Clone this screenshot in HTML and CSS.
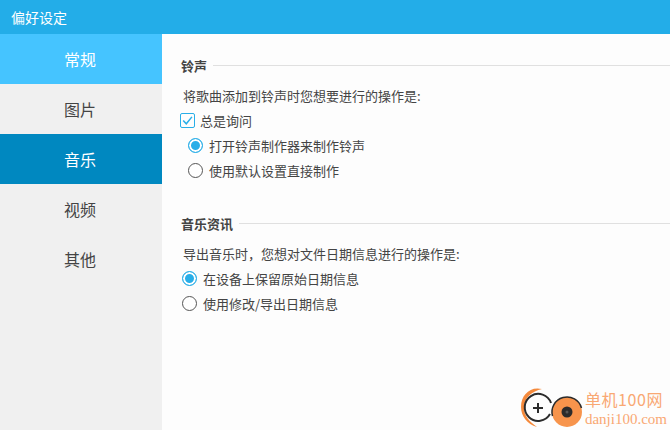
FILE: index.html
```html
<!DOCTYPE html>
<html lang="zh-CN">
<head>
  <meta charset="UTF-8" />
  <title>偏好设定</title>
  <link rel="stylesheet" href="styles.css">
</head>
<body>
  <header class="titlebar">偏好设定</header>
  <div class="layout">
    <nav class="sidebar">
      <a href="#" class="nav-item nav-hover">常规</a>
      <a href="#" class="nav-item">图片</a>
      <a href="#" class="nav-item nav-active">音乐</a>
      <a href="#" class="nav-item">视频</a>
      <a href="#" class="nav-item">其他</a>
    </nav>
    <main class="content">
      <section class="group group-ringtone">
        <div class="group-title"><span>铃声</span></div>
        <p class="desc">将歌曲添加到铃声时您想要进行的操作是:</p>
        <div class="option option-check">
          <span class="checkbox">
            <svg viewBox="0 0 15 15" width="15" height="15"><path d="M3.2 7.4 6.3 10.8 11.9 3.9" fill="none" stroke="#29aee8" stroke-width="1.5"/></svg>
          </span>
          总是询问
        </div>
        <div class="option option-indent"><span class="radio radio-on"></span>打开铃声制作器来制作铃声</div>
        <div class="option option-indent"><span class="radio"></span>使用默认设置直接制作</div>
      </section>
      <section class="group">
        <div class="group-title"><span>音乐资讯</span></div>
        <p class="desc desc-tight">导出音乐时，您想对文件日期信息进行的操作是:</p>
        <div class="option option-tight"><span class="radio radio-on"></span>在设备上保留原始日期信息</div>
        <div class="option option-tight"><span class="radio"></span>使用修改/导出日期信息</div>
      </section>
    </main>
  </div>
  <div class="watermark">
    <svg class="wm-logo" viewBox="0 0 66 44" width="66" height="44">
      <path d="M24 4C12 1 3 10 3 22c0 9 6 17 16 20C12 37 6 31 6 23 6 13 14 6 24 4z" fill="#f58a3c"/>
      <path d="M33 18A13.5 13.5 0 1 0 32 29" fill="none" stroke="#2b2b2b" stroke-width="2"/>
      <path d="M20 18v10M15 23h10" stroke="#2b2b2b" stroke-width="2"/>
      <circle cx="49" cy="27" r="15" fill="#f7944c"/>
      <path d="M34.500 31A15 15 0 0 1 63.500 23" fill="none" stroke="#2b2b2b" stroke-width="1.500"/>
      <circle cx="49" cy="27" r="5.500" fill="#2b2b2b"/>
      <circle cx="49" cy="27" r="1.500" fill="#555"/>
    </svg>
    <div class="wm-text">
      <div class="wm-cn">单机100网</div>
      <div class="wm-url">danji100.com</div>
    </div>
  </div>
</body>
</html>
```

FILE: styles.css
```css
* { box-sizing: border-box; margin: 0; padding: 0; }
html, body { height: 100%; overflow: hidden; }
body {
  font-family: "Noto Sans CJK SC", "Liberation Sans", sans-serif;
  background: #fdfdfd;
  color: #444;
  display: flex;
  flex-direction: column;
}
.titlebar {
  height: 34px;
  flex-shrink: 0;
  background: #23ade8;
  color: white;
  font-size: 14px;
  line-height: 34px;
  padding-left: 11px;
}
.layout {
  flex-grow: 1;
  display: flex;
}
.sidebar {
  width: 162px;
  flex-shrink: 0;
  background: #f0f0f0;
}
.nav-item {
  display: block;
  height: 50px;
  line-height: 50px;
  text-align: center;
  padding-right: 2px;
  font-size: 16px;
  color: #444;
  text-decoration: none;
}
.nav-hover { background: #45c4ff; color: white; }
.nav-active { background: #0088c0; color: white; }
.content {
  flex-grow: 1;
  padding-top: 21px;
}
.group { padding-left: 19px; }
.group-ringtone { height: 158px; }
.group-title {
  display: flex;
  align-items: center;
  gap: 6px;
  height: 20px;
  font-size: 13px;
  font-weight: bold;
  color: #444;
}
.group-title::after {
  content: "";
  flex-grow: 1;
  height: 1px;
  background: #e0e0e0;
}
.desc {
  font-size: 13px;
  line-height: 20px;
  margin-top: 11px;
  padding-left: 2px;
}
.option {
  display: flex;
  align-items: center;
  font-size: 13px;
  height: 25px;
}
.option-check { height: 20px; margin-top: 4px; margin-bottom: 3px; gap: 5px; margin-left: -1px; }
.option-indent { padding-left: 7px; }
.option-tight { padding-left: 1px; }
.desc-tight + .option-tight { margin-top: 2px; }
.checkbox {
  width: 15px;
  height: 15px;
  border: 1px solid #29aee8;
  border-radius: 2px;
  flex-shrink: 0;
}
.checkbox svg { display: block; margin: -1px; }
.radio {
  width: 15px;
  height: 15px;
  border: 1px solid #555;
  border-radius: 50%;
  margin-right: 6px;
  flex-shrink: 0;
  background: white;
}
.radio-on {
  border-color: #29aee8;
  background: #29aee8;
  box-shadow: inset 0 0 0 2px white;
}
.watermark {
  position: absolute;
  right: 0;
  bottom: 1px;
  display: flex;
  align-items: flex-end;
  padding-right: 3px;
}
.wm-logo { display: block; margin-right: 1px; }
.wm-text { padding-bottom: 1px; }
.wm-cn {
  font-family: "Noto Sans CJK SC", sans-serif;
  font-size: 16px;
  letter-spacing: 0.6px;
  line-height: 24px;
  color: #f9a873;
}
.wm-url {
  font-family: "Liberation Serif", serif;
  font-size: 15px;
  line-height: 17px;
  color: #f9a873;
}
```
